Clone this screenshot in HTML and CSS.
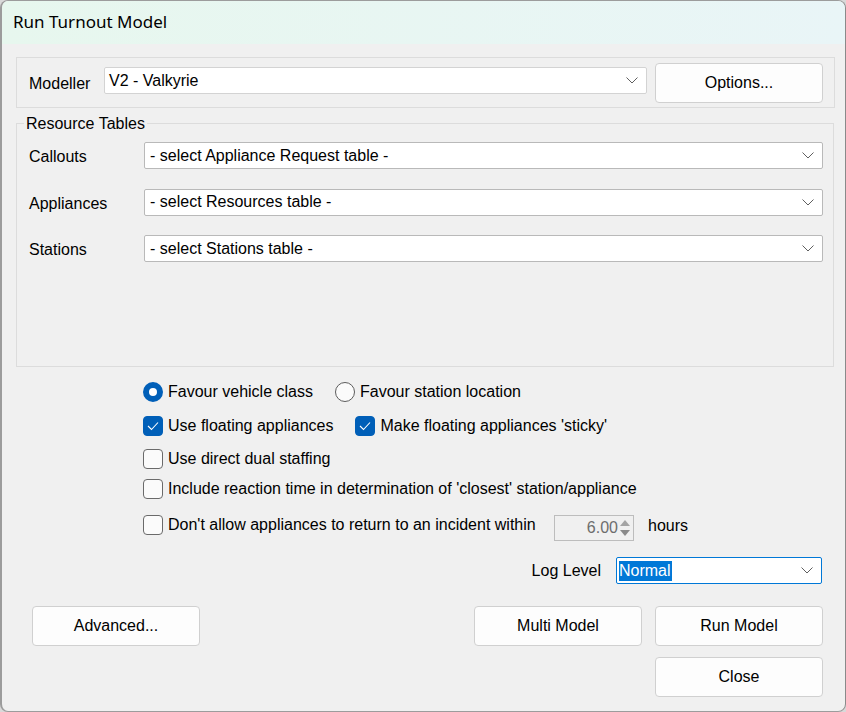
FILE: index.html
```html
<!DOCTYPE html>
<html lang="en">
<head>
    <meta charset="UTF-8">
    <meta name="viewport" content="width=device-width, initial-scale=1.0">
    <title>Run Turnout Model</title>
    <link rel="stylesheet" href="styles.css">
</head>
<body>

    <div class="window">
        <div class="titlebar">Run Turnout Model</div>

        <div class="content">
            <div class="group modeller">
                <span class="label label-modeller">Modeller</span>
                <div class="combo combo-modeller">
                    <span>V2 - Valkyrie</span>
                    <svg class="chevron" width="12" height="7" viewBox="0 0 12 7"><polyline points="0.5,0.5 6,6 11.5,0.5" fill="none" stroke="#5f5f5f" stroke-width="1"/></svg>
                </div>
                <button class="button">Options...</button>
            </div>

            <fieldset class="resources">
                <legend>Resource Tables</legend>
                <div class="table-row">
                    <span class="label label-table">Callouts</span>
                    <div class="combo combo-table">
                        <span>- select Appliance Request table -</span>
                        <svg class="chevron" width="12" height="7" viewBox="0 0 12 7"><polyline points="0.5,0.5 6,6 11.5,0.5" fill="none" stroke="#5f5f5f" stroke-width="1"/></svg>
                    </div>
                </div>
                <div class="table-row">
                    <span class="label label-table">Appliances</span>
                    <div class="combo combo-table">
                        <span>- select Resources table -</span>
                        <svg class="chevron" width="12" height="7" viewBox="0 0 12 7"><polyline points="0.5,0.5 6,6 11.5,0.5" fill="none" stroke="#5f5f5f" stroke-width="1"/></svg>
                    </div>
                </div>
                <div class="table-row">
                    <span class="label label-table">Stations</span>
                    <div class="combo combo-table">
                        <span>- select Stations table -</span>
                        <svg class="chevron" width="12" height="7" viewBox="0 0 12 7"><polyline points="0.5,0.5 6,6 11.5,0.5" fill="none" stroke="#5f5f5f" stroke-width="1"/></svg>
                    </div>
                </div>
            </fieldset>

            <div class="options">
                <div class="opt-row row-1">
                    <span class="radio checked"></span>
                    <span class="opt-text">Favour vehicle class</span>
                    <span class="radio second"></span>
                    <span class="opt-text">Favour station location</span>
                </div>
                <div class="opt-row row-2">
                    <span class="check checked">
                        <svg width="12" height="10" viewBox="0 0 12 10"><polyline points="1,5 4.5,8.5 11,1.5" fill="none" stroke="#fff" stroke-width="1.1"/></svg>
                    </span>
                    <span class="opt-text">Use floating appliances</span>
                    <span class="check checked second">
                        <svg width="12" height="10" viewBox="0 0 12 10"><polyline points="1,5 4.5,8.5 11,1.5" fill="none" stroke="#fff" stroke-width="1.1"/></svg>
                    </span>
                    <span class="opt-text">Make floating appliances 'sticky'</span>
                </div>
                <div class="opt-row row-3">
                    <span class="check"></span>
                    <span class="opt-text">Use direct dual staffing</span>
                </div>
                <div class="opt-row row-4">
                    <span class="check"></span>
                    <span class="opt-text">Include reaction time in determination of 'closest' station/appliance</span>
                </div>
                <div class="opt-row row-5">
                    <span class="check"></span>
                    <span class="opt-text text-within">Don't allow appliances to return to an incident within</span>
                    <div class="spinner">
                        <span class="spin-value">6.00</span>
                        <span class="spin-arrows">
                            <svg width="12" height="22" viewBox="0 0 12 22">
                                <polygon points="6,3 11,9 1,9" fill="#a4a4a4"/>
                                <polygon points="1,13 11,13 6,19" fill="#8a8a8a"/>
                            </svg>
                        </span>
                    </div>
                    <span class="opt-text hours">hours</span>
                </div>
            </div>

            <div class="log-row">
                <span class="label">Log Level</span>
                <div class="combo combo-log">
                    <span class="selected">Normal</span>
                    <svg class="chevron" width="12" height="7" viewBox="0 0 12 7"><polyline points="0.5,0.5 6,6 11.5,0.5" fill="none" stroke="#5f5f5f" stroke-width="1"/></svg>
                </div>
            </div>

            <div class="button-row">
                <button class="button">Advanced...</button>
                <span class="spacer"></span>
                <button class="button">Multi Model</button>
                <button class="button">Run Model</button>
            </div>
            <div class="button-row close-row">
                <button class="button">Close</button>
            </div>
        </div>
    </div>

</body>
</html>
```

FILE: styles.css
```css
body {
    margin: 0;
    background-color: #d9d9d9;
    font-family: "Liberation Sans", Arial, sans-serif;
    font-size: 16px;
    color: #000;
}

.window {
    width: 846px;
    height: 712px;
    box-sizing: border-box;
    background-color: #f0f0f0;
    border: 1px solid #9c9c9c;
    border-left-width: 2px;
    border-right-color: #8a8a8a;
    border-radius: 8px;
    overflow: hidden;
}

.titlebar {
    height: 43px;
    padding-left: 11px;
    line-height: 42px;
    font-family: "Noto Sans", "Open Sans", sans-serif;
    font-size: 17px;
    color: #000;
    background: linear-gradient(to right, #e7f7ee, #e9f5f7);
}

.content {
    padding: 13px 10px 0 14px;
}

/* modeller box */
.group {
    border: 1px solid #dcdcdc;
}

.modeller {
    height: 51px;
    box-sizing: border-box;
    display: flex;
    align-items: flex-start;
    padding: 5px 10px 0 12px;
}

.label-modeller {
    width: 75px;
    margin-top: 11px;
    line-height: 20px;
}

.combo {
    height: 27px;
    box-sizing: border-box;
    background-color: #fff;
    border: 1px solid #b9b9b9;
    border-radius: 2px;
    display: flex;
    align-items: center;
    justify-content: space-between;
    padding: 0 8px 0 4px;
}

.combo-modeller {
    width: 543px;
    margin-top: 4px;
    margin-right: 8px;
    border-color: #d3d3d3;
}

.chevron {
    flex-shrink: 0;
}

.button {
    width: 168px;
    height: 40px;
    font-family: "Liberation Sans", Arial, sans-serif;
    font-size: 16px;
    color: #000;
    background-color: #fdfdfd;
    border: 1px solid #d0d0d0;
    border-radius: 4px;
    padding: 0;
}

/* resource tables */
.resources {
    margin: 6px 1px 0 0;
    border: 1px solid #dcdcdc;
    padding: 10px 10px 104px 12px;
}

.resources legend {
    padding: 0 2px;
    margin-left: -5px;
    line-height: 18px;
    position: relative;
    top: 1px;
}

.table-row {
    display: flex;
    align-items: center;
    margin-bottom: 19.5px;
}

.table-row:last-child {
    margin-bottom: 0;
}

.label-table {
    width: 115px;
    padding-top: 3px;
}

.combo-table {
    flex: 1;
    padding-left: 5px;
}

/* options */
.options {
    margin-left: 127px;
}

.opt-row {
    display: flex;
    align-items: center;
    height: 20px;
}

.row-1 { margin-top: 15px; }
.row-2 { margin-top: 14px; }
.row-3 { margin-top: 13px; }
.row-4 { margin-top: 10px; }
.row-5 { margin-top: 16px; }

.opt-text {
    margin-left: 5px;
    line-height: 20px;
}

.radio {
    width: 20px;
    height: 20px;
    box-sizing: border-box;
    border: 1px solid #5c5c5c;
    border-radius: 50%;
    background-color: #fbfbfb;
}

.radio.checked {
    border: 6px solid #005fb8;
    background-color: #fff;
}

.radio.second {
    margin-left: 22px;
}

.check {
    width: 20px;
    height: 20px;
    box-sizing: border-box;
    border: 1px solid #6a6a6a;
    border-radius: 4px;
    background-color: #fbfbfb;
    display: flex;
    align-items: center;
    justify-content: center;
}

.check.checked {
    border-color: #005fb8;
    background-color: #005fb8;
}

.check.second {
    margin-left: 22px;
}

.row-5 {
    align-items: flex-start;
}

.text-within {
    width: 386px;
}

.spinner {
    width: 80px;
    height: 26px;
    box-sizing: border-box;
    margin-top: 0;
    border: 1px solid #bdbdbd;
    display: flex;
    align-items: center;
    justify-content: flex-end;
    color: #6d6d6d;
}

.spin-arrows {
    display: flex;
    margin: 0 2px 0 1px;
}

.hours {
    margin-left: 14px;
    margin-top: 1px;
}

/* log level */
.log-row {
    display: flex;
    justify-content: flex-end;
    align-items: center;
    margin: 22px 13px 0 0;
}

.combo-log {
    width: 206px;
    margin-left: 15px;
    border-color: #0078d7;
    padding-left: 2px;
}

.selected {
    background-color: #0078d7;
    color: #fff;
    line-height: 20px;
    padding-right: 1px;
}

/* bottom buttons */
.button-row {
    display: flex;
    gap: 13px;
    margin: 22px 12px 0 16px;
}

.spacer {
    flex: 1;
}

.close-row {
    justify-content: flex-end;
    margin-top: 11px;
}
```
